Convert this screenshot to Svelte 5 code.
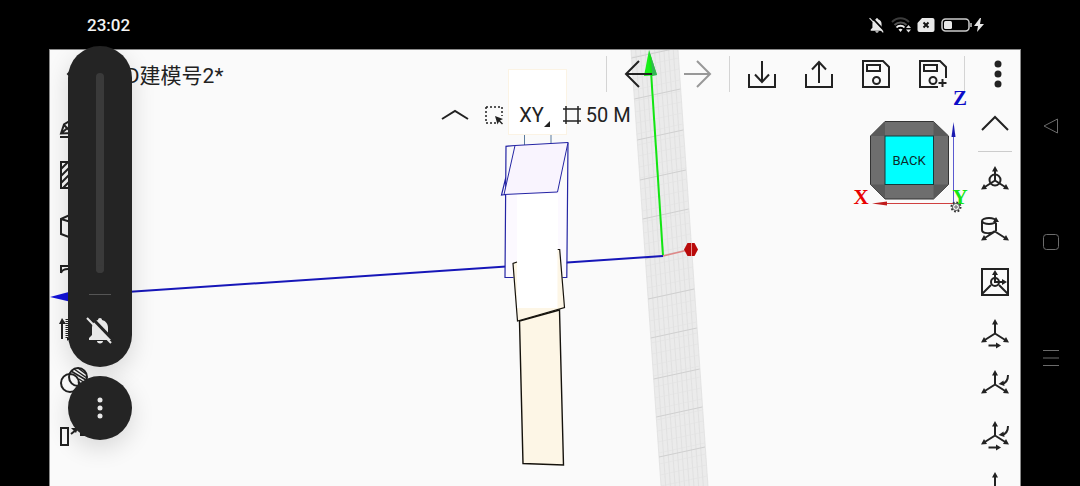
<script lang="ts">
  let volume = $state(0);

  // reference grid, running down the scene at a slant
  const gridTop = { left: 631, right: 678 };
  const gridBottom = { left: 661, right: 708 };
  const rails = Array.from({ length: 11 }, (_, i) => i / 10);
  const hatches = Array.from({ length: 42 }, (_, i) => 46 + i * 11);
  const rungs = [58, 99, 140, 180, 219, 259, 299, 338, 379, 417, 457];

  function edge(y: number): number {
    return gridTop.left + ((y - 50) / 436) * (gridBottom.left - gridTop.left);
  }

  const drawTools = [
    { id: 'sketch', label: 'Sketch' },
    { id: 'hatch', label: 'Hatch' },
    { id: 'solid', label: 'Solid' },
    { id: 'surface', label: 'Surface' },
    { id: 'extrude', label: 'Extrude' },
    { id: 'boolean', label: 'Boolean' },
    { id: 'transform', label: 'Transform' }
  ];

  const axisTools = [
    { id: 'orbit', label: 'Origin' },
    { id: 'cylinder', label: 'Align to body' },
    { id: 'frame', label: 'Align to view' },
    { id: 'move', label: 'Move axes' },
    { id: 'rotate', label: 'Rotate axes' },
    { id: 'both', label: 'Move and rotate axes' },
    { id: 'plain', label: 'Axes' }
  ];
</script>

{#snippet axes()}
  <path d="M14 4v10.500L3 21.500M14 14.500l11 7" />
  <path class="solid" d="M14 0l3 5.500h-6zM0 23.500l3-5.500 3 5zM28 23.500l-3-5.500-3 5z" />
{/snippet}

{#snippet bellOff()}
  <path class="solid" d="M14 2c1.200 0 2 .8 2 2 4 1 6 4 6 8v7l3 3v2H3v-2l3-3v-7c0-4 2-7 6-8 0-1.200.8-2 2-2zM11 25h6c0 1.500-1.300 2.500-3 2.500s-3-1-3-2.500z" />
  <path class="cut" d="M4 0l24 25" />
  <path class="slash" d="M1 2l24 25" />
{/snippet}

<div class="device">
  <div class="main">
    <header class="status">
      <time>23:02</time>
      <div class="indicators">
        <svg class="bell-small" width="16" height="16" viewBox="0 0 28 28" aria-label="Muted">{@render bellOff()}</svg>
        <svg width="20" height="16" viewBox="0 0 20 16" aria-label="Wi-Fi">
          <path d="M1 5c5-5 12-5 17 0" fill="none" stroke="#3c3c3c" stroke-width="2" />
          <path d="M3.500 8c3.500-3.500 9-3.500 12 0" fill="none" stroke="#555" stroke-width="2" />
          <path d="M5.500 10.500c2-2.500 6-2.500 8 0" fill="none" stroke="#eee" stroke-width="2" />
          <path d="M7.500 12.500c1-1 3-1 4 0l-2 2.500z" fill="#eee" />
          <path d="M15 11l2.500-3 2.500 3zM15 12.500l2.500 3 2.500-3z" fill="#ddd" />
        </svg>
        <svg width="18" height="16" viewBox="0 0 18 16" aria-label="No SIM">
          <path d="M5 1h10.500a2 2 0 0 1 2 2v10a2 2 0 0 1-2 2h-13a2 2 0 0 1-2-2V6z" fill="#e8e8e8" />
          <path d="M6.500 5.500l5 5M11.500 5.500l-5 5" stroke="#111" stroke-width="2" />
        </svg>
        <svg width="44" height="16" viewBox="0 0 44 16" aria-label="Battery charging">
          <rect x="1" y="2" width="27" height="12" rx="3.500" fill="none" stroke="#ccc" stroke-width="1.500" />
          <rect x="3" y="4" width="8" height="8" rx="1.500" fill="#e8e8e8" />
          <path d="M30 6v4" stroke="#ccc" stroke-width="1.500" />
          <path d="M39 1l-6 8h4l-1 6 7-8h-4l1-6z" fill="#e8e8e8" />
        </svg>
      </div>
    </header>

    <main class="workspace">
      <svg class="scene" viewBox="50 50 970 436" preserveAspectRatio="xMidYMin slice" aria-hidden="true">
        <polygon points="631,50 678,50 708,486 661,486" fill="#ebebeb" />
        <g stroke="#dadada" stroke-width="0.600">
          {#each rails as t}
            <line x1={gridTop.left + t * 47} y1="50" x2={gridBottom.left + t * 47} y2="486" />
          {/each}
          {#each hatches as y}
            <line x1={edge(y)} y1={y} x2={edge(y) + 46} y2={y - 10} stroke="#e2e2e2" />
          {/each}
          {#each rungs as y}
            <line x1={edge(y)} y1={y} x2={edge(y) + 46} y2={y - 10} stroke="#d0d0d0" stroke-width="1" />
          {/each}
        </g>
        <polygon points="644,76 657,75 649,50" fill="#18f018" />
        <polygon points="652,76 657,75 649,50" fill="#35b455" />
        <line x1="663" y1="256" x2="650" y2="56" stroke="#12e612" stroke-width="2" />
        <line x1="663" y1="256" x2="60" y2="296.500" stroke="#1616b8" stroke-width="2" />
        <polygon points="50,297 80,289 80,304" fill="#1212d8" />
        <line x1="663" y1="256" x2="686" y2="250.500" stroke="#df8888" stroke-width="1.500" />
        <polygon points="684,249.500 687.500,243 694.500,243 698,249.500 694.500,256 687.500,256" fill="#b90a0a" />
        <path d="M691.500 243v13" stroke="#e89090" />

        <rect x="508.500" y="69.500" width="58" height="65" fill="#fff" stroke="#fbf3e4" />
        <path d="M524.500 135v10M551 135v9" stroke="#5b7a9c" fill="none" />
        <polygon points="506,192 567.500,190 566.500,277.500 505,277.500" fill="#fcf9ff" />
        <rect x="517" y="194" width="41" height="114" fill="#fff" />
        <path d="M515 145.500l-9 .8L505 277.500h8.500M568 142.500L566.800 277.500H562M505.700 178l-4.200 17 4.500-.5" fill="none" stroke="#2424a4" stroke-width="1.200" />
        <polygon points="515,145.500 568,142.500 557.500,192 504,194.500" fill="#f9f4fe" stroke="#2424a4" />
        <polygon points="519.500,321 559.500,310 563.500,465 523,463.500" fill="#fdf6e6" stroke="#15120c" stroke-width="1.400" />
        <polygon points="513,263.500 517,262 517,308 557.500,308 557.500,250 560,249.500 565,307.500 517.500,321" fill="#fdf6e6" />
        <path d="M517 262l-4 1.500 4.500 57.500 47-13.500-4.800-58h-2M517.500 321" fill="none" stroke="#15120c" stroke-width="1.200" />
      </svg>

      <div class="topbar">
        <button class="home" aria-label="Back">
          <svg class="icon" width="28" height="28" viewBox="0 0 28 28"><path d="M28 14H0M13 1L0 14l13 13" /></svg>
        </button>
        <h1>3D建模号2*</h1>
        <div class="tools">
          <span class="divider"></span>
          <div class="group">
            <button class="history" aria-label="Undo">
              <svg class="icon" width="28" height="28" viewBox="0 0 28 28"><path d="M27 14H1M14 1L1 14l13 13" /></svg>
            </button>
            <button class="history" aria-label="Redo" disabled>
              <svg class="icon" width="28" height="28" viewBox="0 0 28 28"><path d="M1 14h26M14 1l13 13-13 13" /></svg>
            </button>
          </div>
          <span class="divider"></span>
          <div class="group">
            <button aria-label="Import">
              <svg class="icon" width="28" height="28" viewBox="0 0 28 28"><path d="M1 14v13h26V14M14 1v21M7 14.500l7 7.500 7-7.500" /></svg>
            </button>
            <button aria-label="Export">
              <svg class="icon" width="28" height="28" viewBox="0 0 28 28"><path d="M1 14v13h26V14M14 23V2M7 9.500L14 2l7 7.500" /></svg>
            </button>
            <button aria-label="Save">
              <svg class="icon" width="28" height="28" viewBox="0 0 28 28"><path d="M1 1h20l6 6v20H1zM5 5h13v6H5z" /><circle cx="14.500" cy="20.500" r="3.500" /></svg>
            </button>
            <button aria-label="Save as">
              <svg class="icon" width="28" height="28" viewBox="0 0 28 28"><path d="M19 27H1V1h20l6 6v11M5 5h13v6H5zM23.500 19v8M19.500 23h8" /><circle cx="14" cy="20.500" r="3.500" /></svg>
            </button>
          </div>
          <span class="divider"></span>
          <button class="more" aria-label="More">
            <svg width="8" height="28" viewBox="0 0 8 28" fill="#222"><circle cx="4" cy="4" r="3.500" /><circle cx="4" cy="14" r="3.500" /><circle cx="4" cy="24" r="3.500" /></svg>
          </button>
        </div>
      </div>

      <div class="body">
        <nav class="rail" aria-label="Modelling">
          {#each drawTools as tool (tool.id)}
            <button aria-label={tool.label}>
              <svg class="icon" width="28" height="28" viewBox="0 0 28 28">
                {#if tool.id === 'sketch'}
                  <path d="M-1 27h28M0 23.500l3-9L12 9l9 8-9 6zM0 23.500l7-6M3 15l8 8" />
                {:else if tool.id === 'hatch'}
                  <path d="M0 1h27v26H0zM0 8l7-7M0 15L14 1M0 22L21 1M2 27L27 2M9 27l18-18M16 27l11-11" />
                {:else if tool.id === 'solid'}
                  <path d="M0 7l13-6 13 6v15l-13 5L0 22zM0 7l13 4 13-4M13 11v16" />
                {:else if tool.id === 'surface'}
                  <path d="M0 10V3h26v24M0 10c1-3 3-4 7-4h19" />
                {:else if tool.id === 'extrude'}
                  <path d="M1 25V9" /><path class="solid" d="M1 4l4 6h-7z" />
                  <path d="M6 5v20h20V5" stroke-dasharray="1 1" stroke-width="3" /><path d="M6 25h20" />
                {:else if tool.id === 'boolean'}
                  <circle cx="9" cy="18" r="9" /><circle cx="17" cy="12" r="9" />
                  <path d="M10 6l15 9M13 4l13 9M18 14l6 4M17 17l5 3M17 3l8 6" stroke-width="1.500" />
                {:else}
                  <path d="M0 12h7v17H0z" /><path d="M10 18l5-4" /><path class="solid" d="M17 12l-7 0 5 5z" /><path d="M20 12h7v7h-7z" />
                {/if}
              </svg>
            </button>
          {/each}
        </nav>

        <div class="quickbar">
          <button aria-label="Collapse">
            <svg class="icon" width="28" height="12" viewBox="0 0 28 12"><path d="M1 10l13-8 13 8" /></svg>
          </button>
          <button aria-label="Select area">
            <svg class="icon" width="18" height="20" viewBox="0 0 18 20"><path d="M1 2h16v9M1 2v16h11" stroke-dasharray="2 2" stroke-width="1.500" /><path class="solid" d="M10 11l8 3-3 1.500 3 3-1 1-3-3-1.500 3z" /></svg>
          </button>
          <button class="plane">
            XY
            <svg width="6" height="6" viewBox="0 0 6 6" aria-hidden="true"><path d="M6 0v6H0z" fill="#222" /></svg>
          </button>
          <button class="units">
            <svg class="icon" width="20" height="20" viewBox="0 0 20 20" aria-hidden="true"><path d="M4 1v18M16 1v18M1 4h18M1 16h18" stroke-width="1.500" /></svg>
            50 M
          </button>
        </div>

        <nav class="rail" aria-label="Axes">
          <button aria-label="Collapse axes">
            <svg class="icon" width="28" height="16" viewBox="0 0 28 16"><path d="M1 14L14 1l13 13" /></svg>
          </button>
          <hr />
          {#each axisTools as tool (tool.id)}
            <button aria-label={tool.label}>
              <svg class="icon" width="28" height="28" viewBox="0 0 28 28">
                {#if tool.id === 'frame'}
                  <path d="M1 1h26v26H1zM14 5v9h8M10 17l-9 9M18 17l9 9" />
                  <circle cx="14" cy="14" r="4" />
                  <path class="solid" d="M14 2l3 5h-6zM26 14l-5 3v-6z" />
                {:else if tool.id === 'cylinder'}
                  <path d="M14 14.500L3 21.500M14 14.500l11 7M1 4v9c0 4 10 4 13 1M15 6v8" />
                  <ellipse cx="8" cy="4" rx="7" ry="3" />
                  <path class="solid" d="M15 0l3 5h-6zM0 23.500l3-5.500 3 5zM28 23.500l-3-5.500-3 5z" />
                {:else}
                  {@render axes()}
                  {#if tool.id === 'orbit'}
                    <circle cx="14" cy="14" r="5.500" />
                  {/if}
                  {#if tool.id === 'move' || tool.id === 'both'}
                    <path d="M7.500 26.500h9" /><path class="solid" d="M20 26.500l-5 3v-6z" />
                  {/if}
                  {#if tool.id === 'rotate' || tool.id === 'both'}
                    <path d="M27 5c0 5-2 8-6 9" /><path class="solid" d="M17.500 14l5-3.500 1 5.500z" />
                  {/if}
                {/if}
              </svg>
            </button>
          {/each}
        </nav>
      </div>

      <svg class="viewcube" width="120" height="130" viewBox="850 86 120 130" role="img" aria-label="View cube">
        <polygon points="885,121.500 933.500,121.500 948.500,136 948.500,184.500 933.500,199 885,199 870.500,184.500 870.500,136" fill="#6e6e6e" stroke="#333" />
        <path d="M885 121.500v14.500h-14.500zM933.500 121.500v14.500h15zM885 199v-14.500h-14.500zM933.500 199v-14.500h15z" fill="#5a5a5a" />
        <rect x="885" y="136" width="48.500" height="48.500" fill="#00ffff" stroke="#113c3c" />
        <text class="face" x="909" y="165">BACK</text>
        <path d="M953.500 130v74" stroke="#5a5ad0" />
        <path d="M953.500 122l2 15h-4z" fill="#1a1ab0" />
        <path d="M880 203.500h73" stroke="#d04040" />
        <path d="M872 203.500l15-2v4z" fill="#c01c1c" />
        <text class="axis z" x="960" y="105">Z</text>
        <text class="axis x" x="861" y="204">X</text>
        <text class="axis y" x="960" y="204">Y</text>
        <circle cx="956" cy="207" r="4.500" fill="none" stroke="#333" stroke-width="2" stroke-dasharray="1.800 1.700" />
        <circle cx="956" cy="207" r="3.500" fill="#fafafa" stroke="#333" stroke-width="0.800" />
        <circle cx="956" cy="207" r="1.200" fill="none" stroke="#333" stroke-width="0.800" />
      </svg>
    </main>
  </div>

  <nav class="android" aria-label="System">
    <button aria-label="System back"><svg width="18" height="18" viewBox="0 0 18 18"><path d="M15.500 2v14L2 9z" /></svg></button>
    <button aria-label="Home screen"><svg width="18" height="18" viewBox="0 0 18 18"><rect x="1.500" y="1.500" width="15" height="15" rx="3" /></svg></button>
    <button aria-label="Recent apps"><svg width="18" height="18" viewBox="0 0 18 18"><path d="M1 1.500h16M1 9h16M1 16.500h16" /></svg></button>
  </nav>

  <aside class="overlay">
    <div class="volume">
      <input type="range" min="0" max="100" aria-label="Volume" bind:value={volume} />
      <span class="line"></span>
      <button aria-label="Ringer off">
        <svg class="bell-big" width="28" height="28" viewBox="0 0 28 28">{@render bellOff()}</svg>
      </button>
    </div>
    <button class="options" aria-label="Volume settings">
      <svg width="6" height="22" viewBox="0 0 6 22" fill="#e8e8e8"><circle cx="3" cy="3" r="2.500" /><circle cx="3" cy="11" r="2.500" /><circle cx="3" cy="19" r="2.500" /></svg>
    </button>
  </aside>
</div>

<style>
  :global(body) {
    background: #000;
  }

  .device {
    position: relative;
    display: flex;
    height: 100vh;
    overflow: hidden;
    background: #000;
    color: #222;
    font-family: Roboto, "Noto Sans CJK SC", sans-serif;
  }

  button {
    display: flex;
    align-items: center;
    justify-content: center;
    margin: 0;
    padding: 0;
    border: 0;
    background: none;
    color: inherit;
    font: inherit;
    cursor: pointer;
  }

  svg {
    display: block;
    flex-shrink: 0;
  }

  .icon {
    fill: none;
    stroke: #222;
    stroke-width: 2;
    overflow: visible;
  }

  .icon .solid {
    fill: #222;
    stroke: none;
  }

  .solid {
    fill: #e8e8e8;
  }

  .slash {
    stroke: #e8e8e8;
    stroke-width: 2;
  }

  .cut {
    stroke: #242424;
    stroke-width: 3;
  }

  .bell-small .cut {
    stroke: #000;
  }

  .main {
    display: flex;
    flex: 1;
    flex-direction: column;
    min-width: 0;
  }

  .status {
    display: flex;
    flex: none;
    align-items: center;
    justify-content: space-between;
    height: 49px;
    padding: 0 36px 0 87px;
    color: #f4f4f4;
    font-size: 17px;
    font-weight: 500;
  }

  .indicators {
    display: flex;
    align-items: center;
    gap: 6px;
  }

  .workspace {
    position: relative;
    display: flex;
    flex: 1;
    flex-direction: column;
    min-height: 0;
    margin-left: 49px;
    border: 1px solid #8a8a8a;
    border-bottom: 0;
    background: #fafafa;
    overflow: hidden;
  }

  .scene {
    position: absolute;
    inset: 0;
    width: 100%;
    height: 100%;
  }

  .topbar {
    position: relative;
    display: flex;
    flex: none;
    align-items: center;
    height: 48px;
  }

  .home {
    width: 64px;
    height: 48px;
  }

  h1 {
    flex: 1;
    margin: 0;
    padding-top: 4px;
    font-size: 21px;
    font-weight: 400;
    line-height: 48px;
  }

  .tools {
    display: flex;
    align-items: center;
    gap: 3px;
  }

  .group {
    display: flex;
  }

  .group button {
    width: 57px;
    height: 48px;
  }

  .group .history {
    width: 58px;
  }

  .history:disabled {
    opacity: 0.45;
  }

  .divider {
    width: 1px;
    height: 36px;
    background: #d4d4d4;
  }

  .more {
    width: 52px;
    height: 48px;
    padding-left: 8px;
  }

  .body {
    position: relative;
    display: grid;
    grid-template-columns: 50px 1fr 50px;
    align-items: start;
  }

  .rail {
    display: flex;
    flex-direction: column;
  }

  .rail button {
    flex: none;
    height: 51px;
  }

  .rail hr {
    width: 34px;
    height: 1px;
    margin: 2px auto;
    border: 0;
    background: #ccc;
  }

  .quickbar {
    display: flex;
    align-items: center;
    justify-content: center;
    gap: 16px;
    height: 34px;
    padding-left: 2px;
    font-size: 20px;
  }

  .plane {
    gap: 0;
  }

  .plane svg {
    align-self: flex-end;
  }

  .units {
    gap: 4px;
    margin-left: -4px;
  }

  .viewcube {
    position: absolute;
    top: 36px;
    right: 50px;
  }

  .face {
    fill: #0b2a2a;
    font-size: 13px;
    text-anchor: middle;
  }

  .axis {
    font-family: "Liberation Serif", serif;
    font-size: 21px;
    font-weight: 700;
    text-anchor: middle;
  }

  .x {
    fill: #e80000;
  }

  .y {
    fill: #14e614;
  }

  .z {
    fill: #0c0cc8;
  }

  .android {
    display: flex;
    flex: none;
    flex-direction: column;
    align-items: center;
    justify-content: center;
    gap: 80px;
    width: 59px;
    padding-bottom: 2px;
    box-sizing: border-box;
  }

  .android button {
    width: 36px;
    height: 36px;
  }

  .android svg {
    fill: none;
    stroke: #6c6c6c;
  }

  .overlay {
    position: absolute;
    top: 46px;
    left: 68px;
    display: flex;
    flex-direction: column;
    gap: 9px;
    width: 64px;
  }

  .volume {
    display: flex;
    flex-direction: column;
    align-items: center;
    gap: 21px;
    padding: 27px 0 23px;
    border-radius: 32px;
    background: #242424;
    box-shadow: 0 8px 24px rgba(0, 0, 0, 0.14);
  }

  .volume input {
    width: 8px;
    height: 200px;
    margin: 0;
    border-radius: 4px;
    background: #3a3a3a;
    appearance: none;
    writing-mode: vertical-lr;
    direction: rtl;
  }

  .volume input::-webkit-slider-thumb {
    width: 8px;
    height: 8px;
    border-radius: 4px;
    background: #3a3a3a;
    appearance: none;
  }

  .line {
    width: 22px;
    height: 1px;
    background: #555;
  }

  .options {
    width: 64px;
    height: 64px;
    border-radius: 32px;
    background: #242424;
    box-shadow: 0 8px 24px rgba(0, 0, 0, 0.14);
  }
</style>
